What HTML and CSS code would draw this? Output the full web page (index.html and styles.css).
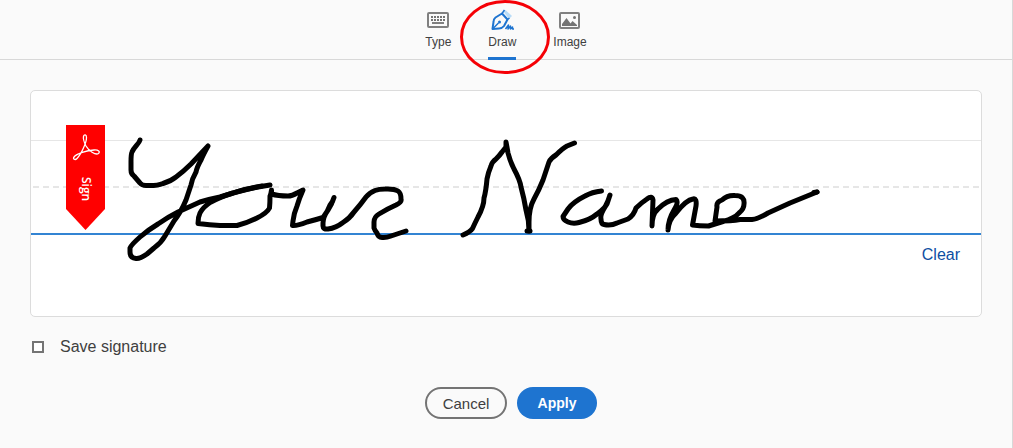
FILE: index.html
```html
<!DOCTYPE html>
<html lang="en">
<head>
<meta charset="utf-8">
<title>Signature</title>
<link rel="stylesheet" href="styles.css">
</head>
<body>
<main class="dialog">
  <div class="tabs" role="tablist">
    <button class="tab" type="button" role="tab" aria-selected="false">
      <svg class="tab-icon" viewBox="0 0 24 24" aria-hidden="true">
        <rect x="2" y="5" width="20" height="14" rx="1" fill="none" stroke="#808080" stroke-width="2"/>
        <path d="M5 9h14M5 12h14" fill="none" stroke="#747474" stroke-width="2" stroke-dasharray="2 1"/>
        <path d="M6 15h12" stroke="#808080" stroke-width="2"/>
      </svg>
      <span>Type</span>
    </button>
    <button class="tab selected" type="button" role="tab" aria-selected="true">
      <svg class="tab-icon" viewBox="0 0 24 24" aria-hidden="true">
        <path d="M13.500 3.500L15.500 2l6.500 6-3 3z" fill="#b9dcf7"/>
        <path d="M12 5.500L5.500 9.500Q3.500 11 3.500 14L2.500 21l6.500-.5q3 0 5-2.500l3.500-6.500z" fill="none" stroke="#1e74d0" stroke-width="2" stroke-linejoin="round"/>
        <path d="M12 5.500l2.500-3.500M17.500 11.500l2-1.500M2.500 21l6-6" fill="none" stroke="#1e74d0" stroke-width="1.500"/>
        <circle cx="9.500" cy="14" r="1.500" fill="#1e74d0"/>
        <path d="M15.500 21l3-4-.5 4 2.500-3v3l2-2v2h1.500" fill="none" stroke="#1e74d0" stroke-width="1.500" stroke-linejoin="round"/>
      </svg>
      <span>Draw</span>
      <svg class="highlight" viewBox="0 0 92 76" aria-hidden="true">
        <ellipse cx="46" cy="38" rx="43.500" ry="35.500" fill="none" stroke="#f50006" stroke-width="3"/>
      </svg>
    </button>
    <button class="tab" type="button" role="tab" aria-selected="false">
      <svg class="tab-icon" viewBox="0 0 24 24" aria-hidden="true">
        <rect x="2" y="5" width="19" height="15" rx="1" fill="none" stroke="#808080" stroke-width="2"/>
        <path d="M4 18v-2l4.500-6 4 5.500 2-2.500 4.500 4v1z" fill="#747474"/>
        <circle cx="16.500" cy="9.500" r="1.500" fill="#747474"/>
      </svg>
      <span>Image</span>
    </button>
  </div>

  <div class="content">
    <section class="pad" aria-label="Signature">
      <div class="rule top"></div>
      <svg class="rule middle" aria-hidden="true"><path d="M2 46H9999" stroke="#e6e6e6" stroke-width="2" stroke-dasharray="6 4"/></svg>
      <div class="rule base"></div>
      <div class="pad-footer"><button class="clear" type="button">Clear</button></div>
      <div class="ribbon">
        <svg class="acrobat" viewBox="0 0 28 28" aria-hidden="true">
          <path d="M11.500 3.500C12 1 14.500 1.500 14.500 4.500C14.500 10 9 21.500 5 25.500C3 27.500 .5 26 2 24C4.500 20.500 15 17.500 22 17C26.500 16.700 28.500 18.500 26.500 20.500C23.500 22.500 16.500 17.500 14 13C12.500 10 11 6 11.500 3.500Z" fill="none" stroke="#fff" stroke-width="1.300"/>
        </svg>
        <span>Sign</span>
      </div>
      <svg class="ink" viewBox="31 91 800 180" aria-hidden="true">
        <path d="M140 140C139 144 134 147 132 152Q131 154 131 162V170Q131 174 134 176L140 183Q142 185.500 146 185.500Q157 186 163 183.500Q171 181 176 177Q184 171 191 164L208 146Q203 155 201 160Q197 167 196 172Q192 179 191 185L186 200Q181 212 174 221L165 236Q161 243 154 248L147 254Q140 259 136 258.500Q130 258 130 252V248Q131 245 140 237Q148 230 158 224Q168 217 178 212Q189 207 200 202Q210 199 220 197Q242 190 258 187L270 185"/>
        <path d="M262 186Q245 189 233 193Q220 197 211 202Q203 207 200 213Q198 217 198 223.500Q210 225 220 225.500H237Q247 223 257 218Q267 213 269.500 208Q270 203 270 196Q271 194 271.500 190V194Q278 196 288 196Q292 196 297 193L303 190Q299 199 297 206Q294 213 293 221L292.500 225.500Q297 226 307 222Q315 220 323 217.500Q328 211 330 205Q333 202 334 197.500Q332 204 328 210Q323 217 323 223V226Q323 229.500 328 229Q336 228 343 222.500Q350 218 354 212Q361 204 366 197Q369 193 375 190.500Q379 189 385 189Q394 188.500 398 191Q401 193 401 199Q402 202 396 205Q387 209 379 214Q374 217 374 222V228Q375 231 377 233Q378 237.500 382 237.500Q386 238 391 236L400 233L406 231"/>
        <path d="M463 235Q470 232 472.500 228.500Q475 223 478 217Q484 206 484 198Q486 191 487 179Q488 173 491 166Q492 162 496 159Q500 155 502 152L506 147V142Q507 147 508 153Q510 161 514 169Q520 180 521 187Q524 198 526 210Q529 220 529 231V222Q529 208 534 199Q539 190 543 180Q547 168 549 162Q551 158 556 155Q563 148 567 146L574.500 143"/>
        <path d="M527 231H530"/>
        <path d="M601.500 191Q592 192 585 196Q573 202 568 209L563 216.500Q563 220 568 222Q573 224 579 222.500Q590 220 597 214Q607 207 608 201L610 195Q608 202 605 207Q600 215 601 219Q601 224 604 224.500Q611 226 617 223L628 219Q634 215 636 208Q641 203 647 199Q652 195 653 200L652 226Q652 214 658 209Q667 200 676 199.500Q679 202 674 210Q668 220 668 230Q669 219 676 213Q686 200 693 199Q697 198 696 206L692.500 225Q699 226 708.500 226L723 221.500Q735 218 739 213Q744 209 744 204Q745 195.500 735 195.500Q727 195 722 200Q716 202 717 207L715 221Q732 221 740 219.500H752Q758 219 768 213L790 203L817 192"/>
        <path d="M814 192.500L817 192"/>
      </svg>
    </section>

    <label class="save"><input class="save-box" type="checkbox">Save signature</label>

    <div class="actions">
      <button class="btn cancel" type="button">Cancel</button>
      <button class="btn apply" type="button">Apply</button>
    </div>
  </div>
</main>
</body>
</html>
```
FILE: styles.css
```css
* { box-sizing: border-box; }

body {
  margin: 0;
  background: #fafafa;
  color: #404040;
  font-family: "Liberation Sans", Arial, sans-serif;
  font-size: 16px;
}

button {
  margin: 0;
  padding: 0;
  border: 0;
  background: none;
  color: inherit;
  font: inherit;
  cursor: pointer;
}

.dialog {
  min-height: 100vh;
  border-right: 1px solid #d8d8d8;
}

.tabs {
  display: flex;
  justify-content: center;
  gap: 37px;
  height: 60px;
  border-bottom: 1px solid #d8d8d8;
}

.tab {
  position: relative;
  display: flex;
  flex-direction: column;
  align-items: center;
  gap: 2px;
  height: 60px;
  padding-top: 8px;
  border-bottom: 3px solid transparent;
  font-size: 12px;
  line-height: 16px;
}

.tab.selected { border-bottom-color: #1e74d0; }

.tab-icon {
  display: block;
  width: 24px;
  height: 24px;
}

.highlight {
  position: absolute;
  top: -1px;
  left: -29px;
  width: 92px;
  height: 76px;
  pointer-events: none;
}

.content { padding: 30px; }

.pad {
  position: relative;
  border: 1px solid #dcdcdc;
  border-radius: 5px;
  background: #fff;
}

.rule {
  display: block;
  width: 100%;
}

.top {
  height: 50px;
  border-bottom: 1px solid #e6e6e6;
}

.middle { height: 47px; }

.base {
  height: 47px;
  border-bottom: 2px solid #3384d3;
}

.pad-footer {
  display: flex;
  justify-content: flex-end;
  height: 81px;
  padding: 10px 21px;
}

.clear {
  height: 20px;
  color: #0d4ea2;
  line-height: 20px;
}

.ribbon {
  position: absolute;
  top: 34px;
  left: 35px;
  display: flex;
  flex-direction: column;
  align-items: center;
  gap: 16px;
  width: 39px;
  height: 105px;
  padding-top: 8px;
  background: #f00;
  clip-path: polygon(0 0, 100% 0, 100% 80%, 50% 100%, 0 80%);
  color: #fff;
  font: 600 12px/16px "Open Sans", sans-serif;
}

.ribbon span { writing-mode: vertical-rl; }

.acrobat {
  width: 28px;
  height: 28px;
}

.ink {
  position: absolute;
  top: 0;
  left: 0;
  width: 800px;
  height: 180px;
  fill: none;
  stroke: #000;
  stroke-width: 5;
  stroke-linecap: round;
  stroke-linejoin: round;
  pointer-events: none;
}

.save {
  display: flex;
  align-items: center;
  gap: 16px;
  width: max-content;
  margin-top: 20px;
  padding-left: 2px;
  line-height: 20px;
}

.save-box {
  appearance: none;
  width: 12px;
  height: 12px;
  margin: 0;
  border: 2px solid #747474;
  background: #fff;
}

.save-box:checked { background: #1e74d0; }

.actions {
  display: flex;
  justify-content: center;
  margin-top: 30px;
}

.btn {
  height: 32px;
  margin-left: 10px;
  border-radius: 16px;
}

.cancel {
  width: 82px;
  border: 2px solid #747474;
  font-size: 15px;
}

.apply {
  width: 80px;
  background: #1e74d0;
  color: #fff;
  font-size: 14px;
  font-weight: bold;
}
```
